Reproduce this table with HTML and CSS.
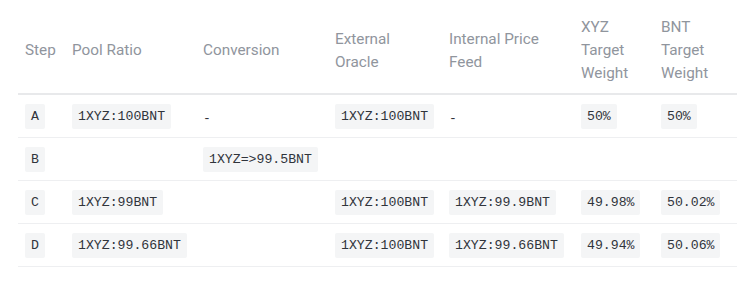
FILE: index.html
```html
<!DOCTYPE html>
<html>
<head>
<meta charset="utf-8">
<link rel="stylesheet" href="styles.css">
</head>
<body>
<div class="wrap">
<table class="steps">
  <colgroup>
    <col class="c1"><col class="c2"><col class="c3"><col class="c4"><col class="c5"><col class="c6"><col class="c7">
  </colgroup>
  <thead>
    <tr>
      <th>Step</th>
      <th>Pool Ratio</th>
      <th>Conversion</th>
      <th>External<br>Oracle</th>
      <th>Internal Price<br>Feed</th>
      <th>XYZ<br>Target<br>Weight</th>
      <th>BNT<br>Target<br>Weight</th>
    </tr>
  </thead>
  <tbody>
    <tr>
      <td><code>A</code></td>
      <td><code>1XYZ:100BNT</code></td>
      <td><span class="dash">-</span></td>
      <td><code>1XYZ:100BNT</code></td>
      <td><span class="dash">-</span></td>
      <td><code>50%</code></td>
      <td><code>50%</code></td>
    </tr>
    <tr>
      <td><code>B</code></td>
      <td></td>
      <td><code>1XYZ=&gt;99.5BNT</code></td>
      <td></td>
      <td></td>
      <td></td>
      <td></td>
    </tr>
    <tr>
      <td><code>C</code></td>
      <td><code>1XYZ:99BNT</code></td>
      <td></td>
      <td><code>1XYZ:100BNT</code></td>
      <td><code>1XYZ:99.9BNT</code></td>
      <td><code>49.98%</code></td>
      <td><code>50.02%</code></td>
    </tr>
    <tr>
      <td><code>D</code></td>
      <td><code>1XYZ:99.66BNT</code></td>
      <td></td>
      <td><code>1XYZ:100BNT</code></td>
      <td><code>1XYZ:99.66BNT</code></td>
      <td><code>49.94%</code></td>
      <td><code>50.06%</code></td>
    </tr>
  </tbody>
</table>
</div>
</body>
</html>
```
FILE: styles.css
```css
html, body {
  margin: 0;
  padding: 0;
  background: #ffffff;
}
.wrap {
  padding: 8px 13px 0 18px;
}
.steps {
  width: 719px;
  table-layout: fixed;
  border-collapse: collapse;
  font-family: Roboto, "Liberation Sans", sans-serif;
}
.c1 { width: 47px; }
.c2 { width: 131px; }
.c3 { width: 132px; }
.c4 { width: 114px; }
.c5 { width: 132px; }
.c6 { width: 80px; }
.c7 { width: 83px; }
.steps th {
  text-align: left;
  font-weight: 400;
  font-size: 15.3px;
  line-height: 23px;
  color: #90959d;
  padding: 8px 4px 8px 7px;
  vertical-align: middle;
  border-bottom: 2px solid #e8e9eb;
}
.steps td {
  padding: 9px 4px 8px 7px;
  height: 25px;
  vertical-align: middle;
  border-bottom: 1px solid #eeeff1;
  white-space: nowrap;
}
.steps code {
  display: inline-block;
  font-family: "Liberation Mono", monospace;
  font-size: 13.2px;
  line-height: 17px;
  padding: 4px 6px;
  background: #f4f5f6;
  color: #30343b;
  border-radius: 2px;
}
.dash {
  font-family: "Liberation Mono", monospace;
  font-size: 13px;
  color: #30343b;
}
```
